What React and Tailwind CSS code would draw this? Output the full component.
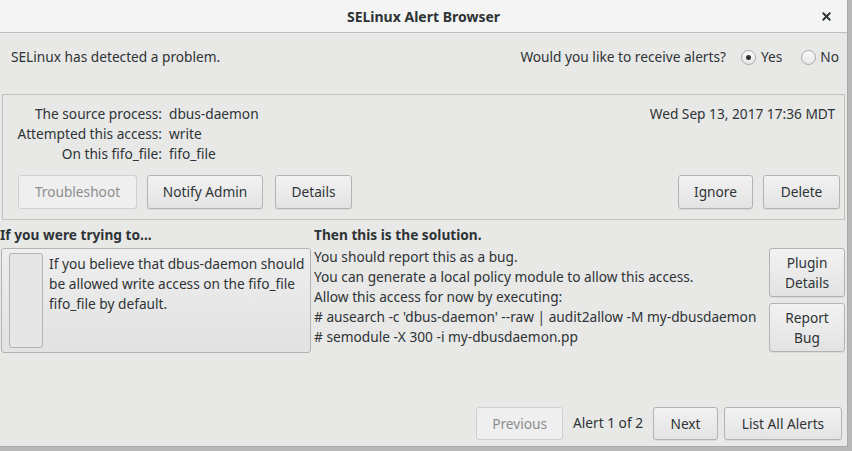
import { X } from "lucide-react";

const Btn = ({ children, disabled, className = "" }) => (
  <button
    className={
      "rounded-[3px] border text-center leading-[20px] " +
      (disabled
        ? "border-[#cfcfcf] bg-[#efefef] text-[#8b8e8f] "
        : "border-[#b3b3b3] bg-gradient-to-b from-[#f2f2f2] to-[#e3e3e3] text-[#2e3436] shadow-[0_1px_0_rgba(0,0,0,0.06)] ") +
      className
    }
  >
    {children}
  </button>
);

const Radio = ({ checked }) => (
  <span className="flex h-[15px] w-[15px] items-center justify-center rounded-full border border-[#a8a8a8] bg-gradient-to-b from-[#fafafa] to-[#e6e6e6]">
    {checked && <span className="h-[5px] w-[5px] rounded-full bg-[#2e3436]" />}
  </span>
);

export default function App() {
  return (
    <div
      className="h-[451px] w-[852px] overflow-hidden bg-[#b8b8b8] text-[13.7px] text-[#2e3436]"
      style={{ fontFamily: '"Noto Sans", "DejaVu Sans", sans-serif' }}
    >
      <div className="flex h-[447px] w-[848px] flex-col border-r border-b border-[#a9a9a9] bg-[#e8e8e7]">
        {/* title bar */}
        <div className="relative flex h-[33px] shrink-0 items-center justify-center border-b border-[#bdbdbd] bg-[#f4f4f4]">
          <span className="font-bold text-[14px]">SELinux Alert Browser</span>
          <X className="absolute right-[14px] top-[10px] h-[13px] w-[13px]" strokeWidth={3.5} />
        </div>

        {/* header */}
        <div className="flex h-[61px] shrink-0 items-start justify-between pl-[11px] pr-[8px] pt-[14px]">
          <span>SELinux has detected a problem.</span>
          <div className="flex items-center">
            <span className="mr-[15px]">Would you like to receive alerts?</span>
            <Radio checked />
            <span className="ml-[5px] mr-[19px]">Yes</span>
            <Radio />
            <span className="ml-[4px]">No</span>
          </div>
        </div>

        {/* alert panel */}
        <div className="mx-[2px] flex h-[126px] shrink-0 flex-col border border-[#c2c2c2] pt-[9px]">
          <div className="flex justify-between pr-[9px]">
            <div className="grid grid-cols-[159px_auto] gap-x-[7px] leading-[20px]">
              <span className="text-right">The source process:</span>
              <span>dbus-daemon</span>
              <span className="text-right">Attempted this access:</span>
              <span>write</span>
              <span className="text-right">On this fifo_file:</span>
              <span>fifo_file</span>
            </div>
            <span className="leading-[20px]">Wed Sep 13, 2017 17:36 MDT</span>
          </div>
          <div className="mt-[11px] flex pl-[15px] pr-[4px]">
            <Btn disabled className="h-[34px] w-[119px]">Troubleshoot</Btn>
            <Btn className="ml-[10px] h-[34px] w-[116px]">Notify Admin</Btn>
            <Btn className="ml-[12px] h-[34px] w-[77px]">Details</Btn>
            <div className="flex-1" />
            <Btn className="h-[34px] w-[75px]">Ignore</Btn>
            <Btn className="ml-[10px] h-[34px] w-[77px]">Delete</Btn>
          </div>
        </div>

        {/* solution */}
        <div className="mt-[5px] flex">
          <div className="w-[312px] shrink-0">
            <div className="font-bold leading-[20px]">If you were trying to...</div>
            <div className="ml-[1px] mt-[3px] flex h-[105px] w-[310px] rounded-[3px] border border-[#b3b3b3] bg-gradient-to-b from-[#eeeeee] to-[#e2e2e2] py-[4px] pl-[7px] pr-[2px]">
              <div className="h-[95px] w-[34px] shrink-0 rounded-[3px] border border-[#b3b3b3] bg-[#e6e6e6]" />
              <div className="ml-[6px] pt-[1px] leading-[20px]">
                If you believe that dbus-daemon should be allowed write access on the fifo_file fifo_file by default.
              </div>
            </div>
          </div>
          <div className="ml-[2px] flex-1">
            <div className="font-bold leading-[20px]">Then this is the solution.</div>
            <div className="flex">
              <div className="flex-1 pt-[2px] leading-[20px]">
                <div>You should report this as a bug.</div>
                <div>You can generate a local policy module to allow this access.</div>
                <div>Allow this access for now by executing:</div>
                <div># ausearch -c 'dbus-daemon' --raw | audit2allow -M my-dbusdaemon</div>
                <div># semodule -X 300 -i my-dbusdaemon.pp</div>
              </div>
              <div className="mr-[2px] mt-[3px] flex w-[76px] flex-col gap-[6px]">
                <Btn className="h-[49px] w-[76px]">
                  Plugin
                  <br />
                  Details
                </Btn>
                <Btn className="h-[49px] w-[76px]">
                  Report
                  <br />
                  Bug
                </Btn>
              </div>
            </div>
          </div>
        </div>

        <div className="flex-1" />

        {/* bottom nav */}
        <div className="mb-[6px] flex items-center justify-end pr-[5px]">
          <Btn disabled className="h-[33px] w-[87px]">Previous</Btn>
          <span className="mx-[10px]">Alert 1 of 2</span>
          <Btn className="h-[33px] w-[65px]">Next</Btn>
          <Btn className="ml-[6px] h-[33px] w-[118px]">List All Alerts</Btn>
        </div>
      </div>
    </div>
  );
}
